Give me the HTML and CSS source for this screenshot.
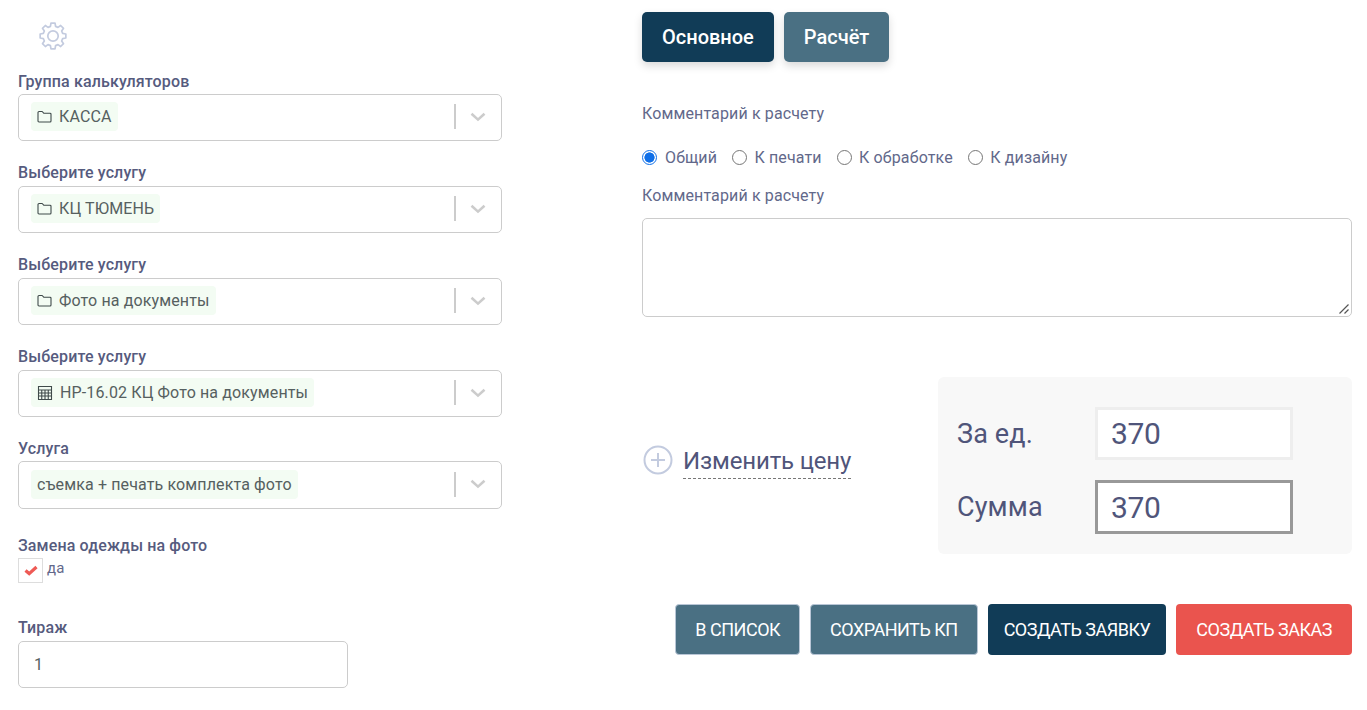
FILE: index.html
```html
<!DOCTYPE html>
<html lang="ru">
<head>
<meta charset="utf-8">
<title>Калькулятор</title>
<link rel="stylesheet" href="styles.css">
</head>
<body>
<div class="page">
  <section class="left">
    <div class="gear">
      <svg width="28" height="28" viewBox="0 0 28 28" fill="none" stroke="#c3cbdf" stroke-width="1.7" stroke-linejoin="round"><circle cx="14" cy="14" r="5.2"/><polygon points="11.41,4.34 11.97,1.16 16.03,1.16 16.59,4.34 19,5.34 21.64,3.48 24.52,6.36 22.66,9 23.66,11.41 26.84,11.97 26.84,16.03 23.66,16.59 22.66,19 24.52,21.64 21.64,24.52 19,22.66 16.59,23.66 16.03,26.84 11.97,26.84 11.41,23.66 9,22.66 6.36,24.52 3.48,21.64 5.34,19 4.34,16.59 1.16,16.03 1.16,11.97 4.34,11.41 5.34,9 3.48,6.36 6.36,3.48 9,5.34"/></svg>
    </div>

    <div class="field">
      <div class="label">Группа калькуляторов</div>
      <div class="select">
        <span class="tag"><svg class="ico" width="15" height="13" viewBox="0 0 15 13" fill="none" stroke="#3f4a4a" stroke-width="1.1" stroke-linejoin="round"><path d="M1 2.5a1 1 0 0 1 1-1h3.2l1.5 1.7H13a1 1 0 0 1 1 1V11a1 1 0 0 1-1 1H2a1 1 0 0 1-1-1z"/></svg>КАССА</span>
        <span class="sep"></span>
        <svg class="chev" width="18" height="10" viewBox="0 0 18 10" fill="none" stroke="#cccccc" stroke-width="2.6"><path d="M2.5 1.8 9 7.6l6.5-5.8"/></svg>
      </div>
    </div>

    <div class="field">
      <div class="label label-up">Выберите услугу</div>
      <div class="select">
        <span class="tag"><svg class="ico" width="15" height="13" viewBox="0 0 15 13" fill="none" stroke="#3f4a4a" stroke-width="1.1" stroke-linejoin="round"><path d="M1 2.5a1 1 0 0 1 1-1h3.2l1.5 1.7H13a1 1 0 0 1 1 1V11a1 1 0 0 1-1 1H2a1 1 0 0 1-1-1z"/></svg>КЦ ТЮМЕНЬ</span>
        <span class="sep"></span>
        <svg class="chev" width="18" height="10" viewBox="0 0 18 10" fill="none" stroke="#cccccc" stroke-width="2.6"><path d="M2.5 1.8 9 7.6l6.5-5.8"/></svg>
      </div>
    </div>

    <div class="field">
      <div class="label label-up">Выберите услугу</div>
      <div class="select">
        <span class="tag"><svg class="ico" width="15" height="13" viewBox="0 0 15 13" fill="none" stroke="#3f4a4a" stroke-width="1.1" stroke-linejoin="round"><path d="M1 2.5a1 1 0 0 1 1-1h3.2l1.5 1.7H13a1 1 0 0 1 1 1V11a1 1 0 0 1-1 1H2a1 1 0 0 1-1-1z"/></svg>Фото на документы</span>
        <span class="sep"></span>
        <svg class="chev" width="18" height="10" viewBox="0 0 18 10" fill="none" stroke="#cccccc" stroke-width="2.6"><path d="M2.5 1.8 9 7.6l6.5-5.8"/></svg>
      </div>
    </div>

    <div class="field field-tight">
      <div class="label label-up">Выберите услугу</div>
      <div class="select">
        <span class="tag"><svg class="ico calc" width="16" height="16" viewBox="0 0 16 16" fill="none" stroke="#3f4a4a" stroke-width="1.1"><path d="M1.5 1.5h13v13h-13zM1.5 5h13M1.5 8h13M1.5 11h13M4.75 5v9.5M8 5v9.5M11.25 5v9.5"/></svg>НР-16.02 КЦ Фото на документы</span>
        <span class="sep"></span>
        <svg class="chev" width="18" height="10" viewBox="0 0 18 10" fill="none" stroke="#cccccc" stroke-width="2.6"><path d="M2.5 1.8 9 7.6l6.5-5.8"/></svg>
      </div>
    </div>

    <div class="field">
      <div class="label">Услуга</div>
      <div class="select tall">
        <span class="tag">съемка + печать комплекта фото</span>
        <span class="sep"></span>
        <svg class="chev" width="18" height="10" viewBox="0 0 18 10" fill="none" stroke="#cccccc" stroke-width="2.6"><path d="M2.5 1.8 9 7.6l6.5-5.8"/></svg>
      </div>
    </div>

    <div class="field check-field">
      <div class="label">Замена одежды на фото</div>
      <div class="check-row">
        <span class="check"><svg width="14" height="11" viewBox="0 0 14 11" fill="none" stroke="#ee5a55" stroke-width="3.2"><path d="M1.5 5.5 5.2 8.6 12.5 2"/></svg></span>
        <span class="check-text">да</span>
      </div>
    </div>

    <div class="field qty-field">
      <div class="label qty-label">Тираж</div>
      <div class="qty">1</div>
    </div>
  </section>

  <section class="right">
    <div class="tabs">
      <button class="tab tab-dark">Основное</button>
      <button class="tab tab-mid">Расчёт</button>
    </div>
    <div class="cmt-head">Комментарий к расчету</div>
    <div class="radios">
      <label class="radio"><span class="dot on"></span>Общий</label>
      <label class="radio"><span class="dot"></span>К печати</label>
      <label class="radio"><span class="dot"></span>К обработке</label>
      <label class="radio"><span class="dot"></span>К дизайну</label>
    </div>
    <div class="cmt-label">Комментарий к расчету</div>
    <div class="area">
      <svg class="grip" width="12" height="12" viewBox="0 0 12 12" stroke="#555" stroke-width="1.2"><path d="M1.5 10.5 10.5 1.5M6.5 10.5l4-4"/></svg>
    </div>

    <div class="price-row">
      <div class="change">
        <svg width="32" height="32" viewBox="0 0 32 32" fill="none" stroke="#c3cbdf"><circle cx="16" cy="16" r="13.5" stroke-width="2"/><path d="M16 9v14M9 16h14" stroke-width="2"/></svg>
        <span class="change-text">Изменить цену</span>
      </div>
      <div class="price-box">
        <div class="price-line">
          <span class="price-label">За ед.</span>
          <div class="price-input">370</div>
        </div>
        <div class="price-line">
          <span class="price-label">Сумма</span>
          <div class="price-input active">370</div>
        </div>
      </div>
    </div>

    <div class="actions">
      <button class="act act-mid">В СПИСОК</button>
      <button class="act act-mid">СОХРАНИТЬ КП</button>
      <button class="act act-dark">СОЗДАТЬ ЗАЯВКУ</button>
      <button class="act act-red">СОЗДАТЬ ЗАКАЗ</button>
    </div>
  </section>
</div>
</body>
</html>
```

FILE: styles.css
```css
* { box-sizing: border-box; }
html, body { margin: 0; padding: 0; background: #fff; overflow: hidden; }
body { font-family: Roboto, "Noto Sans", sans-serif; color: #50557a; letter-spacing: .13px; }

.page { display: flex; height: 710px; }

.left { width: 642px; padding-left: 18px; flex: none; }
.right { width: 710px; flex: none; padding-top: 12px; }

.gear { height: 72px; padding: 22px 0 0 21px; }
.gear svg { display: block; }

.field { width: 484px; margin-bottom: 23px; }
.field-tight { margin-bottom: 22px; }
.label { font-size: 16px; font-weight: 500; line-height: 20px; height: 22px; color: #565b7e; }
.label-up { line-height: 18px; }

.select {
  height: 47px;
  border: 1px solid #cccccc;
  border-radius: 5px;
  display: flex;
  align-items: center;
  padding: 0 0 2px 12px;
  background: #fff;
}
.select.tall { height: 48px; }
.tag {
  display: flex;
  align-items: center;
  height: 29px;
  padding: 0 6px;
  background: #f3fcf3;
  border-radius: 4px;
  font-size: 16px;
  color: #566060;
  margin-right: auto;
}
.ico { margin-right: 7px; }
.sep { width: 2px; height: 25px; background: #cccccc; margin: 0 13px 0 1px; }
.chev { margin-right: 14px; }

.check-field { margin-bottom: 0; margin-top: 27px; }
.check-row { display: flex; align-items: center; height: 26px; margin-top: -1px; }
.check {
  width: 25px;
  height: 25px;
  border: 1px solid #ddd;
  display: flex;
  align-items: center;
  justify-content: center;
  margin-right: 4px;
}
.check-text { font-size: 15px; color: #62688a; margin-top: -4px; }

.qty-field { width: 330px; margin-top: 35px; }
.qty-label { height: 23px; }
.qty {
  height: 47px;
  border: 1px solid #cccccc;
  border-radius: 5px;
  font-size: 16px;
  color: #566060;
  padding: 0 15px;
  display: flex;
  align-items: center;
}

.tabs { display: flex; gap: 10px; }
.tab {
  height: 50px;
  border: 0;
  border-radius: 5px;
  color: #fff;
  font-family: inherit;
  font-size: 20px;
  font-weight: 500;
  padding: 0 20px;
  box-shadow: 0 4px 8px rgba(0, 0, 0, .15);
}
.tab-dark { background: #113c57; }
.tab-mid { background: #4a7083; }

.cmt-head { margin-top: 42px; font-size: 16px; line-height: 20px; color: #62688a; }
.radios { display: flex; margin-top: 23px; height: 20px; }
.radio { display: flex; align-items: center; font-size: 16px; color: #62688a; margin-right: 15.4px; }
.dot {
  width: 15px;
  height: 15px;
  border: 1px solid #767676;
  border-radius: 50%;
  margin-right: 7px;
  background: #fff;
}
.dot.on {
  border: 1.5px solid #0f6fe8;
  background: radial-gradient(circle, #0f6fe8 0 4.8px, #fff 5.4px);
  margin-right: 8px;
}
.cmt-label { margin-top: 19px; font-size: 16px; line-height: 20px; color: #62688a; }
.area {
  margin-top: 12px;
  height: 99px;
  border: 1px solid #cccccc;
  border-radius: 5px;
  position: relative;
}
.grip { position: absolute; right: 1px; bottom: 1px; }

.price-row { display: flex; margin-top: 60px; justify-content: space-between; align-items: center; }
.change { display: flex; align-items: center; margin-bottom: 12px; }
.change-text {
  font-size: 24px;
  letter-spacing: -.15px;
  line-height: 34px;
  margin-left: 9px;
  color: #50557a;
  border-bottom: 1px dashed #777;
  margin-top: 4px;
}
.price-box {
  width: 414px;
  height: 177px;
  background: #f8f8f8;
  border-radius: 6px;
  padding: 30px 0 0 19px;
}
.price-line { display: flex; align-items: center; margin-bottom: 20px; }
.price-label { width: 138px; font-size: 27px; color: #50557a; }
.price-input {
  width: 198px;
  height: 53px;
  background: #fff;
  border: 3px solid #eeeeee;
  font-size: 30px;
  letter-spacing: -.3px;
  padding: 0 13px;
  display: flex;
  align-items: center;
  color: #50557a;
}
.price-input.active { border-color: #999999; height: 54px; }

.actions { display: flex; justify-content: flex-end; gap: 10px; margin-top: 50px; }
.act {
  height: 51px;
  border: 1px solid transparent;
  border-radius: 4px;
  color: #fff;
  font-family: inherit;
  font-size: 18px;
  letter-spacing: -.5px;
  padding: 0 15px;
}
.act-mid { background: #4a7083; border-color: #b9c6d6; padding: 0 19px; }
.act-dark { background: #113c57; }
.act-red { background: #ea544e; padding: 0 19px; }
```
